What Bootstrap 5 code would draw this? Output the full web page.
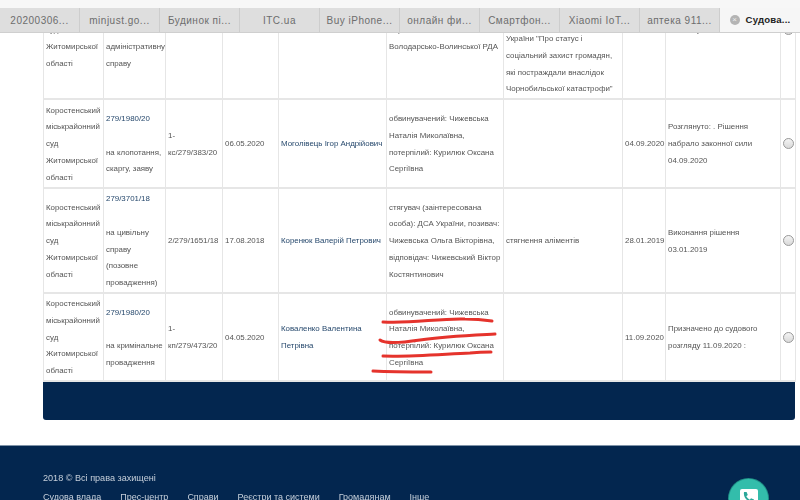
<!DOCTYPE html>
<html lang="uk">
<head>
<meta charset="utf-8">
<title>Судова влада</title>
<link href="https://cdn.jsdelivr.net/npm/bootstrap@5.3.0/dist/css/bootstrap.min.css" rel="stylesheet">
<style>
html,body{height:500px;overflow:hidden;background:#fff}
body{font-family:"Liberation Sans",Arial,sans-serif;color:#555}
.shot{position:relative;height:500px;overflow:hidden;filter:blur(.4px)}
.tabstrip{height:33px;padding-top:8px;background:#f7f7f7;border-bottom:1px solid #cfcfcf;position:relative;z-index:2}
.tabitem{width:80px;height:24px;background:#dedede;border-right:1px solid #cdcdcd;color:#6d6d6d;font-size:10px;letter-spacing:.5px;white-space:nowrap}
.tabitem.on{background:#f6f6f6;border-right:0;color:#222;font-weight:600;font-size:9.6px;letter-spacing:.2px}
.tabclose{width:10px;height:10px;border-radius:50%;background:#b4b4b4;color:#eee;font-size:8px;line-height:10px;text-align:center;margin-right:6px;font-weight:400;letter-spacing:0}
.pagearea{height:467px;overflow:hidden}
.pageinner{padding:0 5px 0 43px}
.casetable{table-layout:fixed;width:752px;margin:-72px 0 0;border-collapse:collapse;font-size:7.9px;line-height:16.7px}
.casetable td{border:1px solid #e6e6e6;border-width:0 1px 2px 1px;padding:2px 2px 0;vertical-align:middle;color:#555;overflow:hidden}
.casetable td.lowcell{vertical-align:bottom}
.c1{width:60px}.c2{width:62px}.c3{width:57px}.c4{width:56px}.c5{width:108px}.c6{width:117px}.c7{width:119px}.c8{width:43px}.c9{width:115px}.c10{width:15px}
.rowa{height:138px}.rowb{height:89px}.rowc{height:105px}.rowd{height:88px}
.casenum{color:#27496d}
.casetable td.judge{color:#27496d}
.casetable td.radiocell{padding:0 2px}
.fakeradio{display:block;width:11px;height:11px;margin:0 auto;border-radius:50%;border:1px solid #999;background:linear-gradient(#f4f4f4,#d9d9d9)}
.darkband{height:38px;background:#03264f;border-radius:0 0 3px 3px}
.sitefoot{margin-top:25px;height:60px;background:#03264f;padding:25px 0 0 43px;color:#c6cfda;font-size:9.1px;line-height:14px;border-top:1px solid #7f93a8}
.sitefoot a{color:#c6cfda;text-decoration:none;white-space:nowrap;font-size:9px}
.footlinks{margin-top:5px;gap:19px}
.scribble{position:absolute;left:0;top:0;width:800px;height:500px;z-index:3;pointer-events:none}
.callbtn{position:absolute;left:729px;top:479px;width:39px;height:39px;border-radius:50%;background:#33bdab;box-shadow:0 0 0 1px #1f8f86;z-index:3}
.callbtn svg{display:block;margin:10px auto 0}
</style>
</head>
<body>
<div class="shot">
  <div class="tabstrip d-flex">
    <div class="tabitem d-flex align-items-center justify-content-center">20200306...</div>
    <div class="tabitem d-flex align-items-center justify-content-center">minjust.go...</div>
    <div class="tabitem d-flex align-items-center justify-content-center">Будинок пі...</div>
    <div class="tabitem d-flex align-items-center justify-content-center">ITC.ua</div>
    <div class="tabitem d-flex align-items-center justify-content-center">Buy iPhone...</div>
    <div class="tabitem d-flex align-items-center justify-content-center">онлайн фи...</div>
    <div class="tabitem d-flex align-items-center justify-content-center">Смартфон...</div>
    <div class="tabitem d-flex align-items-center justify-content-center">Xiaomi IoT...</div>
    <div class="tabitem d-flex align-items-center justify-content-center">аптека 911...</div>
    <div class="tabitem on d-flex align-items-center justify-content-center"><span class="tabclose">×</span>Судова...</div>
  </div>
  <div class="pagearea">
    <div class="pageinner">
    <table class="casetable">
      <colgroup><col class="c1"><col class="c2"><col class="c3"><col class="c4"><col class="c5"><col class="c6"><col class="c7"><col class="c8"><col class="c9"><col class="c10"></colgroup>
      <tbody>
      <tr class="rowa">
        <td>Коростенський міськрайонний суд Житомирської області</td>
        <td><span class="casenum">279/</span><br><br>на адміністративну справу</td>
        <td></td><td></td><td></td>
        <td>відповідач:<br>Управління<br>Володарсько-Волинської РДА</td>
        <td class="lowcell">України "Про статус і<br>соціальний захист громадян,<br>які постраждали внаслідок<br>Чорнобильської катастрофи"</td>
        <td></td><td>Розглянуто</td>
        <td class="radiocell"><span class="fakeradio"></span></td>
      </tr>
      <tr class="rowb">
        <td>Коростенський міськрайонний суд Житомирської області</td>
        <td><span class="casenum">279/1980/20</span><br><br>на клопотання, скаргу, заяву</td>
        <td>1-кс/279/383/20</td>
        <td>06.05.2020</td>
        <td class="judge">Моголівець Ігор Андрійович</td>
        <td>обвинувачений: Чижевська Наталія Миколаївна, потерпілий: Курилюк Оксана Сергіївна</td>
        <td></td>
        <td>04.09.2020</td>
        <td>Розглянуто: . Рішення набрало законної сили 04.09.2020</td>
        <td class="radiocell"><span class="fakeradio"></span></td>
      </tr>
      <tr class="rowc">
        <td>Коростенський міськрайонний суд Житомирської області</td>
        <td><span class="casenum">279/3701/18</span><br><br>на цивільну справу (позовне провадження)</td>
        <td>2/279/1651/18</td>
        <td>17.08.2018</td>
        <td class="judge">Коренюк Валерій Петрович</td>
        <td>стягувач (заінтересована особа): ДСА України, позивач: Чижевська Ольга Вікторівна, відповідач: Чижевський Віктор Костянтинович</td>
        <td>стягнення аліментів</td>
        <td>28.01.2019</td>
        <td>Виконання рішення 03.01.2019</td>
        <td class="radiocell"><span class="fakeradio"></span></td>
      </tr>
      <tr class="rowd">
        <td>Коростенський міськрайонний суд Житомирської області</td>
        <td><span class="casenum">279/1980/20</span><br><br>на кримінальне провадження</td>
        <td>1-кп/279/473/20</td>
        <td>04.05.2020</td>
        <td class="judge">Коваленко Валентина Петрівна</td>
        <td>обвинувачений: Чижевська Наталія Миколаївна, потерпілий: Курилюк Оксана Сергіївна</td>
        <td></td>
        <td>11.09.2020</td>
        <td>Призначено до судового розгляду 11.09.2020 :</td>
        <td class="radiocell"><span class="fakeradio"></span></td>
      </tr>
      </tbody>
    </table>
    <div class="darkband"></div>
    </div>
    <footer class="sitefoot">
      <div>2018 © Всі права захищені</div>
      <div class="footlinks d-flex">
        <a href="#">Судова влада</a>
        <a href="#">Прес-центр</a>
        <a href="#">Справи</a>
        <a href="#">Реєстри та системи</a>
        <a href="#">Громадянам</a>
        <a href="#">Інше</a>
      </div>
    </footer>
  </div>
  <svg class="scribble" viewBox="0 0 800 500" fill="none" stroke="#e5332c" stroke-width="3" stroke-linecap="round">
    <path d="M383 322C410 324 440 318 465 319C475 319 485 320 492 321"/>
    <path d="M380 340C385 344 400 343 420 340C445 336 475 335 495 334"/>
    <path d="M383 356C410 357 445 354 470 353C480 352 487 352 491 352"/>
    <path d="M373 371C392 372 412 372 431 372"/>
  </svg>
  <div class="callbtn"><svg width="18" height="18" viewBox="0 0 18 18"><rect width="18" height="18" rx="2" fill="#fff"/><path d="M4 3h2.600l1.200 3-1.500 1.200c.8 1.500 2 2.700 3.500 3.500L11 9.200l3 1.200V13c-5.500 1.200-11.200-4.500-10-10z" fill="#2aa79a"/></svg></div>
</div>
</body>
</html>
